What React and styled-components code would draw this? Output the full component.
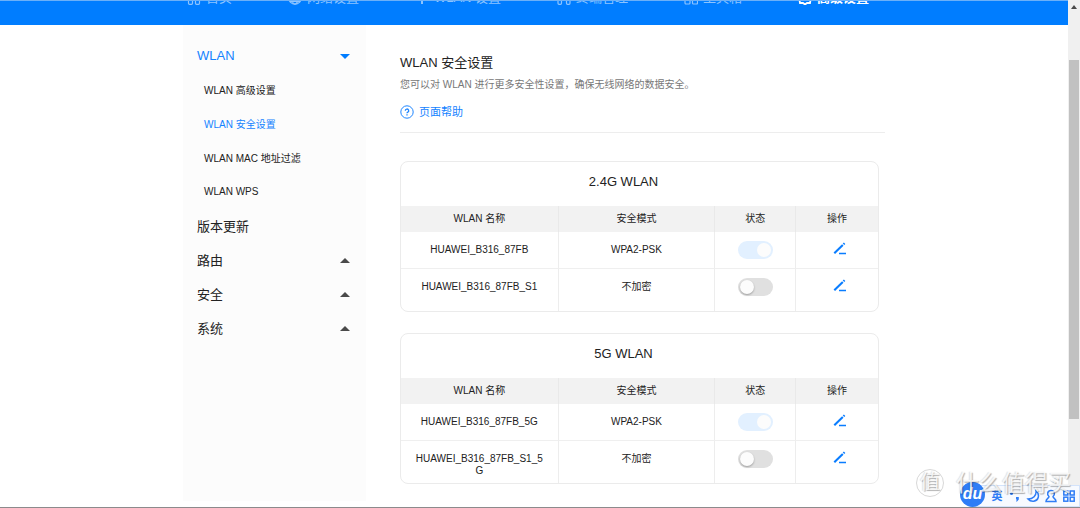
import React, { useState } from 'react';
import styled, { createGlobalStyle } from 'styled-components';

const menu = [
  { label: 'WLAN', arrow: 'down', active: true },
  { label: 'WLAN 高级设置', sub: true },
  { label: 'WLAN 安全设置', sub: true, active: true },
  { label: 'WLAN MAC 地址过滤', sub: true },
  { label: 'WLAN WPS', sub: true },
  { label: '版本更新' },
  { label: '路由', arrow: 'up' },
  { label: '安全', arrow: 'up' },
  { label: '系统', arrow: 'up' },
];

const bands = [
  {
    title: '2.4G WLAN',
    rows: [
      { name: 'HUAWEI_B316_87FB', mode: 'WPA2-PSK', on: true },
      { name: 'HUAWEI_B316_87FB_S1', mode: '不加密', on: false },
    ],
  },
  {
    title: '5G WLAN',
    rows: [
      { name: 'HUAWEI_B316_87FB_5G', mode: 'WPA2-PSK', on: true },
      { name: 'HUAWEI_B316_87FB_S1_5G', mode: '不加密', on: false },
    ],
  },
];

const navItems = [
  {
    label: '首页',
    icon: <><path d="M1 6L7 1l6 5" /><rect x="1.500" y="7" width="4" height="6.300" rx="1" /><rect x="8.500" y="7" width="4" height="6.300" rx="1" /></>,
  },
  {
    label: '网络设置',
    icon: <><circle cx="7" cy="7" r="6.200" /><ellipse cx="7" cy="7" rx="3" ry="6.200" /><path d="M1 7h12M2 10.500h10" /></>,
  },
  {
    label: 'WLAN 设置',
    icon: <><path d="M1 5a8.500 8.500 0 0 1 12 0M3.500 8a5 5 0 0 1 7 0" /><path d="M7 9v4" strokeWidth="2" /></>,
  },
  {
    label: '终端管理',
    icon: <><path d="M1 8V2h12v6" /><rect x="1" y="8" width="3.500" height="5.300" rx="1" /><rect x="9.500" y="8" width="3.500" height="5.300" rx="1" /></>,
  },
  {
    label: '工具箱',
    icon: <><rect x="1" y="1" width="5" height="5" rx="1" /><rect x="8.500" y="1" width="5" height="5" rx="1" /><rect x="1" y="8" width="5" height="5" rx="1" /><rect x="8.500" y="8" width="5" height="5" rx="1" /></>,
  },
  {
    label: '高级设置',
    active: true,
    icon: <><path d="M5 2l2-1.500L9 2h3l.5 3L14 7l-1.500 2-.5 3H9l-2 1.500L5 12H2l-.5-3L0 7l1.500-2L2 2z" /><circle cx="7" cy="7" r="2" /></>,
  },
];

const BandCard = ({ title, rows }) => {
  const [states, setStates] = useState(rows.map((row) => row.on));

  const toggle = (index) => {
    setStates(states.map((on, i) => (i === index ? !on : on)));
  };

  return (
    <Card>
      <CardTitle>{title}</CardTitle>
      <Table>
        <thead>
          <tr>
            <HeadCell $width="33%">WLAN 名称</HeadCell>
            <HeadCell $width="33%">安全模式</HeadCell>
            <HeadCell $width="17%">状态</HeadCell>
            <HeadCell>操作</HeadCell>
          </tr>
        </thead>
        <tbody>
          {rows.map((row, index) => (
            <Row key={row.name}>
              <Cell>{row.name}</Cell>
              <Cell>{row.mode}</Cell>
              <ControlCell>
                <Switch
                  type="checkbox"
                  aria-label={row.name}
                  checked={states[index]}
                  onChange={() => toggle(index)}
                />
              </ControlCell>
              <ControlCell>
                <EditButton type="button" aria-label={`${row.name} 操作`}>
                  <svg width="14" height="14" viewBox="0 0 14 14" fill="none" stroke="#0a7dff">
                    <path d="M1.300 11.300L9.800 3" strokeWidth="2.100" />
                    <path d="M10.500 2.300l1.100-1.100" strokeWidth="2.100" />
                    <path d="M6 11.500h7" strokeWidth="1.300" />
                  </svg>
                </EditButton>
              </ControlCell>
            </Row>
          ))}
        </tbody>
      </Table>
    </Card>
  );
};

const App = () => {
  return (
    <Screen>
      <GlobalStyle />
      <Page>
        <Header>
          <Nav>
            {navItems.map((item) => (
              <NavLink href="#" key={item.label} $active={item.active}>
                <svg width="14" height="14" viewBox="0 0 14 14" fill="none" stroke="currentColor" strokeWidth={item.active ? 1.8 : 1.2}>
                  {item.icon}
                </svg>
                {item.label}
              </NavLink>
            ))}
          </Nav>
        </Header>
        <Main>
          <Sidebar>
            {menu.map((item) => (
              <MenuLink href="#" key={item.label} $sub={item.sub} $active={item.active}>
                {item.label}
                {item.arrow && <Arrow $down={item.arrow === 'down'} />}
              </MenuLink>
            ))}
          </Sidebar>
          <Content>
            <Title>WLAN 安全设置</Title>
            <Description>您可以对 WLAN 进行更多安全性设置，确保无线网络的数据安全。</Description>
            <Help href="#">
              <svg width="14" height="14" viewBox="0 0 14 14" fill="none" stroke="#1f86ff">
                <circle cx="7" cy="7" r="6.200" strokeWidth="1" />
                <path d="M5.300 5.700a1.700 1.700 0 1 1 2.500 1.500c-.6.3-.8.600-.8 1.100" strokeWidth="1.300" />
                <path d="M7 9.300v1.300" strokeWidth="1.300" />
              </svg>
              页面帮助
            </Help>
            <Cards>
              {bands.map((band) => (
                <BandCard key={band.title} title={band.title} rows={band.rows} />
              ))}
            </Cards>
          </Content>
        </Main>
      </Page>
      <ScrollTrack>
        <Arrow $scroll />
        <ScrollThumb />
      </ScrollTrack>
      <InputBar>
        <InputLogo>du</InputLogo>
        <InputKey>英</InputKey>
        <InputKey>
          <svg width="14" height="14" viewBox="0 0 14 14" fill="#2f7df6">
            <circle cx="3.500" cy="4.500" r="1.500" />
            <path d="M8 8h2.800v2.500L9 12.500H8l.9-2H8z" />
          </svg>
        </InputKey>
        <InputKey>
          <svg width="14" height="14" viewBox="0 0 14 14" fill="none" stroke="#2f7df6" strokeWidth="1.500">
            <path d="M10 2c.6 4.500-3 8-8 8 3 3.500 9 3 10.200-1.500C12.900 5.800 12 3.500 10 2z" />
          </svg>
        </InputKey>
        <InputKey>
          <svg width="14" height="14" viewBox="0 0 14 14" fill="none" stroke="#2f7df6" strokeWidth="1.500">
            <path d="M5 7.500C2.500 5.500 3.500 1.500 7 1.500s4.500 4 2 6c0 2 3 2 3 5H2c0-3 3-3 3-5z" />
          </svg>
        </InputKey>
        <InputKey>
          <svg width="14" height="14" viewBox="0 0 14 14" fill="none" stroke="#2f7df6" strokeWidth="1.500">
            <rect x="1.800" y="2" width="4" height="4" />
            <rect x="8.200" y="2" width="4" height="4" />
            <rect x="1.800" y="8.200" width="4" height="4" />
            <rect x="8.200" y="8.200" width="4" height="4" />
          </svg>
        </InputKey>
      </InputBar>
      <Watermark>
        <WatermarkSeal>值</WatermarkSeal>
        什么值得买
      </Watermark>
    </Screen>
  );
};

const GlobalStyle = createGlobalStyle`
  * {
    box-sizing: border-box;
  }
  body {
    margin: 0;
    background: #fff;
    color: #222;
    font-family: "Liberation Sans", "Noto Sans CJK SC", sans-serif;
    font-size: 10px;
  }
  a {
    text-decoration: none;
  }
`;

const Screen = styled.div`
  position: relative;
  display: flex;
  min-height: 100vh;
  border-bottom: 1px solid #8c8a8c;
  overflow: hidden;
`;

const Page = styled.div`
  flex: 1;
  min-width: 0;
`;

const Header = styled.header`
  height: 25px;
  padding-bottom: 18px;
  display: flex;
  align-items: flex-end;
  background: #007dff;
  border-top: 1px solid #6bb0f8;
  overflow: hidden;
`;

const Nav = styled.nav`
  width: 100%;
  max-width: 702px;
  margin: 0 auto;
  padding: 0 16px 0 4px;
  display: flex;
  justify-content: space-between;
`;

const NavLink = styled.a`
  display: flex;
  align-items: center;
  gap: 5px;
  font-size: 13px;
  line-height: 18px;
  white-space: nowrap;
  font-weight: ${({ $active }) => ($active ? 700 : 400)};
  color: ${({ $active }) => ($active ? '#fff' : '#8cc4ff')};
`;

const Main = styled.main`
  display: flex;
  gap: 34px;
  width: 100%;
  max-width: 702px;
  margin: 0 auto;
  padding-bottom: 6px;
`;

const Sidebar = styled.aside`
  flex: 0 0 183px;
  padding: 13px 16px 0 14px;
  background: #fcfcfc;
`;

const MenuLink = styled.a`
  display: flex;
  align-items: center;
  justify-content: space-between;
  height: 34px;
  padding-left: ${({ $sub }) => ($sub ? '7px' : '0')};
  font-size: ${({ $sub }) => ($sub ? '10px' : '13px')};
  color: ${({ $active }) => ($active ? '#1483ff' : '#222')};
`;

const Arrow = styled.span`
  width: ${({ $scroll }) => ($scroll ? '6px' : '10px')};
  height: ${({ $scroll }) => ($scroll ? '4px' : '5px')};
  background: ${({ $down }) => ($down ? '#007dff' : '#4a4a4a')};
  clip-path: ${({ $down }) => ($down ? 'polygon(0 0, 100% 0, 50% 100%)' : 'polygon(50% 0, 100% 100%, 0 100%)')};
  margin-top: ${({ $scroll }) => ($scroll ? '5px' : '3px')};
  justify-self: center;
`;

const Content = styled.section`
  flex: 1;
  min-width: 0;
  padding: 28px 0 17px;
`;

const Title = styled.h1`
  margin: 0 0 2px;
  font-size: 13px;
  font-weight: 400;
  line-height: 20px;
`;

const Description = styled.p`
  margin: 0;
  line-height: 20px;
  color: #777;
`;

const Help = styled.a`
  display: flex;
  align-items: center;
  gap: 5px;
  padding: 7px 0 10px;
  border-bottom: 1px solid #ededed;
  font-size: 11px;
  line-height: 20px;
  color: #1483ff;
`;

const Cards = styled.div`
  display: flex;
  flex-direction: column;
  gap: 21px;
  padding: 28px 6px 0 0;
`;

const Card = styled.section`
  border: 1px solid #ebebeb;
  border-radius: 8px;
  overflow: hidden;
`;

const CardTitle = styled.h2`
  margin: 0;
  padding: 0 32px 4px 0;
  font-size: 13px;
  font-weight: 400;
  line-height: 40px;
  text-align: center;
`;

const Table = styled.table`
  width: 100%;
  table-layout: fixed;
  border-collapse: separate;
  border-spacing: 0;
  line-height: 12px;
  text-align: center;
`;

const HeadCell = styled.th`
  width: ${({ $width }) => $width || '83px'};
  height: 26px;
  padding: 0;
  background: #f2f2f2;
  font-weight: 400;

  & + & {
    border-left: 1px solid #e9e9e9;
  }
`;

const Cell = styled.td`
  height: 36px;
  padding: 12px 14px 0;
  vertical-align: top;
  word-break: break-all;

  & + & {
    border-left: 1px solid #ededed;
  }
`;

const ControlCell = styled(Cell)`
  padding: 9px 0 0;
  border-left: 1px solid #ededed;
`;

const Row = styled.tr`
  & + & td {
    height: 43px;
    border-top: 1px solid #efefef;
  }
`;

const Switch = styled.input`
  appearance: none;
  display: flex;
  align-items: center;
  width: 35px;
  height: 18px;
  margin: 0 auto;
  padding: 0 2px;
  border-radius: 9px;
  background: #e0e0e0;
  cursor: pointer;

  &::before {
    content: '';
    width: 14px;
    height: 14px;
    border-radius: 50%;
    background: #fcfcfc;
    box-shadow: 0 1px 2px rgba(0, 0, 0, 0.3);
  }

  &:checked {
    justify-content: flex-end;
    background: #e2f0ff;
  }

  &:checked::before {
    box-shadow: none;
  }
`;

const EditButton = styled.button`
  display: block;
  margin: 0 auto;
  padding: 1px 0 0 6px;
  border: 0;
  background: none;
  cursor: pointer;

  svg {
    display: block;
  }
`;

const ScrollTrack = styled.div`
  flex: 0 0 12px;
  display: grid;
  grid-template-rows: 60fr 360fr 88fr;
  padding: 0 1px;
  background: #f0f0f0;
`;

const ScrollThumb = styled.div`
  background: #c1c1c1;
`;

const InputBar = styled.div`
  position: absolute;
  right: 0;
  bottom: 0;
  display: flex;
  align-items: center;
  height: 22px;
  padding-right: 1px;
  background: #f7faff;
  border: 1px solid #d3e3fb;
`;

const InputLogo = styled.span`
  width: 25px;
  height: 25px;
  margin: 0 3px 4px -16px;
  border-radius: 50%;
  background: #2f7df6;
  color: #fff;
  font-size: 16px;
  font-style: italic;
  font-weight: 700;
  line-height: 24px;
  text-align: center;
`;

const InputKey = styled.span`
  display: flex;
  justify-content: center;
  width: 18px;
  color: #2f7df6;
  font-size: 11px;
  font-weight: 700;
  line-height: 14px;
`;

const Watermark = styled.div`
  position: absolute;
  right: 9px;
  bottom: 9px;
  display: flex;
  align-items: center;
  gap: 12px;
  font-size: 23px;
  line-height: 30px;
  color: rgba(255, 255, 255, 0.8);
  text-shadow: 1px 1px 1px rgba(0, 0, 0, 0.3), -1px 0 1px rgba(0, 0, 0, 0.12);
  pointer-events: none;
`;

const WatermarkSeal = styled.span`
  width: 28px;
  height: 28px;
  border: 1px solid #d8d8d8;
  border-radius: 50%;
  font-size: 20px;
  line-height: 25px;
  text-align: center;
`;

export default App;
